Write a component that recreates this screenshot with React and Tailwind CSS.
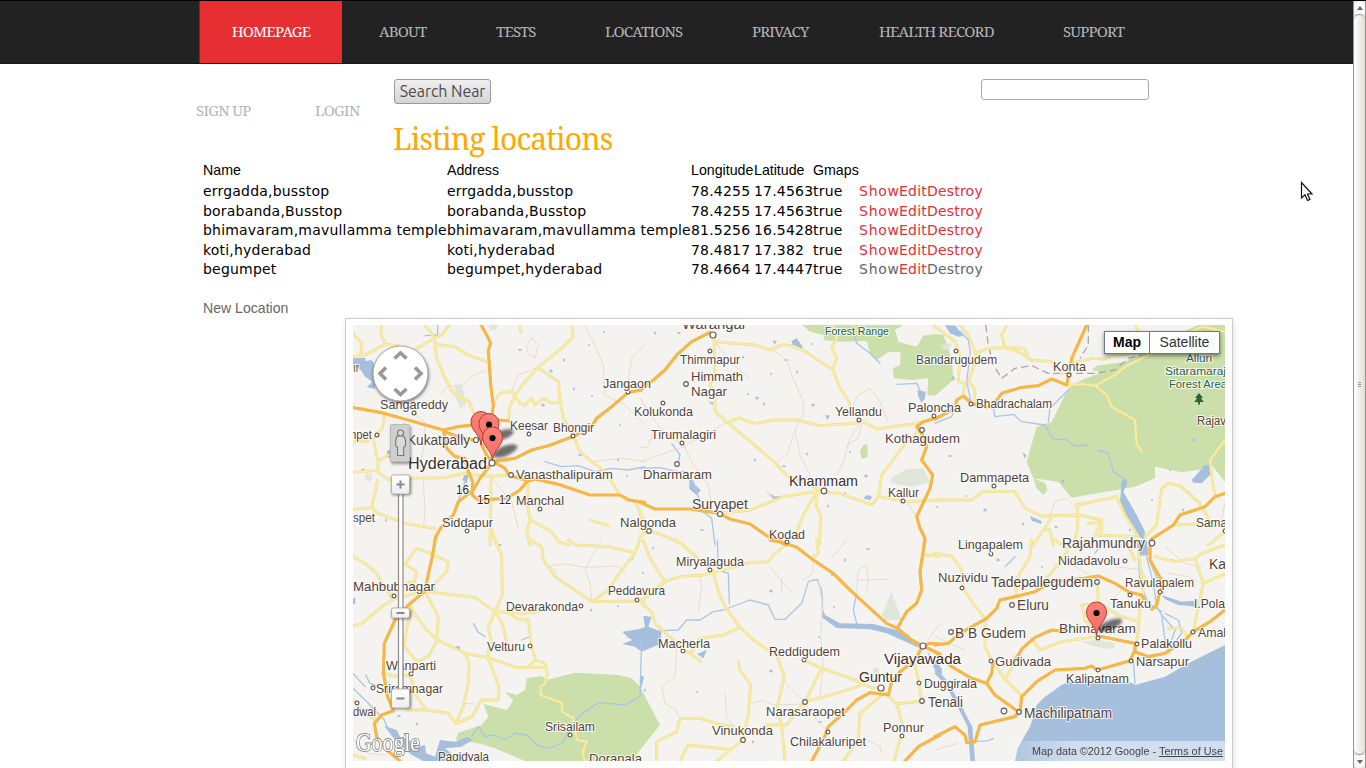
import React from "react";

/* Each tile is traced on a grid three times finer than the page. */
const TILES = [
  {
    x: 345, y: 315,
    green: [],
    pale: ["M330 215 L352 208 L362 270 L345 280 L332 250Z", "M60 475 L82 480 L78 498 L60 495Z", "M430 30 L460 30 L455 44 L435 46Z"],
    water: ["M24 130 L60 128 L62 138 L80 135 L95 160 L90 222 L65 216 L82 200 L60 185 L48 165 L24 150Z", "M360 475 L372 480 L365 505 L352 495Z", "M125 408 L140 402 L138 432 L128 425Z"],
    river: ["M600 440 L650 455 L700 452 L750 470 L800 460 L850 465 L900 455", "M278 30 L278 60 L240 62", "M360 500 L345 540 L340 560"],
    minor: ["M425 165 L380 185 L350 210 L310 215 L285 235", "M545 95 L560 68 L580 90 L570 130 L550 115Z", "M720 30 L745 80 L775 150 L778 240 L840 270 L900 330", "M900 90 L860 130 L845 225", "M575 158 L520 180 L500 230", "M235 500 L240 590 L235 640", "M440 490 L500 560 L520 640", "M740 440 L830 430 L900 440", "M205 250 L215 300 L240 320 L235 400 L225 470"],
    yellow: ["M24 125 L65 118 L120 88 L160 92", "M110 30 L108 60 L122 88", "M24 55 L50 85 L48 120", "M315 30 L290 60 L268 68 L220 98 L195 110", "M240 30 L255 50 L268 68 L275 130 L300 190 L325 235 L372 260 L385 290 L395 310", "M270 88 L330 95 L370 120 L430 142", "M680 30 L685 65 L655 95 L625 120 L578 158 L540 200 L510 240 L495 275 L490 315", "M578 158 L640 200 L645 255 L655 310 L685 360 L705 410 L740 440 L775 465 L800 500 L825 540 L870 560 L900 620 L895 650", "M447 262 L465 235 L500 228 L525 265 L540 270 L560 250 L570 270 L595 250 L620 265 L645 260", "M120 295 L112 340 L85 370 L90 400 L100 440 L98 470 L130 495 L190 490 L300 488 L360 475 L430 485 L490 480", "M24 472 L98 466", "M24 583 L80 578 L100 595 L180 625 L270 640", "M24 380 L70 378", "M98 495 L80 578", "M98 440 L130 420", "M438 480 L435 690", "M548 505 L550 590 L556 615 L620 650 L640 680 L670 690", "M556 615 L545 650 L555 690", "M735 615 L790 632", "M525 30 L528 52", "M437 640 L455 690"],
    orange: ["M24 278 L110 293 L200 318 L295 345 L340 335 L400 328 L440 312 L490 318", "M408 30 L425 60 L437 85 L430 105 L437 210 L445 270 L440 312", "M295 345 L305 400 L330 425 L360 430 L368 465 L383 500 L382 540 L400 555 L485 550 L525 525 L545 500 L570 492 L640 508 L735 540 L825 540 L850 555 L900 562", "M300 350 L355 372 L390 375", "M410 390 L425 420 L440 440 L510 430 L560 405 L610 392 L690 362 L740 335 L755 310 L800 275 L850 232 L890 225", "M445 440 L480 460 L492 480 L520 490 L548 495", "M440 445 L405 490 L385 525 L340 560 L325 600 L290 635 L272 665 L268 690"],
  },
  {
    x: 345, y: 540,
    green: ["M332 600 L340 578 L410 555 L430 530 L415 492 L485 510 L505 482 L480 456 L515 465 L540 450 L545 415 L590 408 L605 420 L690 398 L820 405 L860 415 L885 440 L945 555 L885 630 L860 663 H540 L450 625 L400 610Z"],
    pale: ["M130 160 L150 158 L150 178 L132 176Z"],
    water: ["M900 262 L880 268 L832 275 L850 293 L862 300 L832 312 L870 320 L890 335 L945 312 L950 275 L910 260 L920 230 L895 228Z", "M118 558 L155 570 L165 590 L190 598 L215 622 L240 615 L243 640 L270 650 L285 600 L330 605 L370 590 L382 600 L350 620 L300 625 L325 645 L300 663 H235 L200 645 L150 600Z", "M24 175 L32 175 L30 192 L24 192Z", "M328 320 L345 318 L345 328 L332 330Z"],
    river: ["M380 590 L400 560 L420 590 L450 585 L480 600 L510 580 L545 585 L575 615 L610 625 L650 610 L680 560 L700 530 L760 488 L840 495 L885 470 L890 300", "M24 445 L70 490 L118 540 L130 570", "M62 405 L75 430 L100 440", "M385 250 L398 275 L420 290", "M530 300 L555 290", "M24 400 L60 440"],
    minor: ["M615 78 L660 72 L720 82 L820 78 L840 100", "M615 78 L640 100", "M770 0 L740 50 L720 90 L735 130 L740 180", "M360 490 L390 492", "M24 600 L70 640 L120 645"],
    yellow: ["M24 50 L60 70 L95 100 L120 150 L150 170", "M24 258 L50 250 L75 230 L110 200 L150 175 L235 155", "M262 42 L215 25 L180 72 L215 95 L208 125 L185 130", "M262 42 L310 65 L305 95 L270 130 L265 155", "M245 155 L390 172 L450 215 L540 220 L580 215", "M450 0 L470 45 L472 165 L450 215 L430 260 L438 300 L428 352", "M190 195 L245 270 L277 300 L360 340 L428 352 L515 383 L600 383", "M243 160 L280 230 L275 305 L250 350 L235 355", "M200 200 L185 265 L178 320 L215 365 L240 355", "M115 400 L155 410 L195 405 L215 470 L245 510", "M185 510 L245 510 L310 520 L333 550 L355 500 L370 430 L372 370 L360 340", "M333 550 L382 530 L408 480 L460 480 L462 440 L428 352", "M450 215 L470 245 L485 305", "M490 220 L520 238 L550 240 L560 320 L572 360 L600 370 L607 400 L600 432 L587 440 L587 465 L650 488 L652 515 L685 535 L695 600 L725 605 L712 640 L720 663", "M545 383 L572 360", "M555 0 L590 20 L595 60 L630 110 L740 185 L880 183 L900 187", "M740 185 L790 150 L830 90 L870 40 L885 0", "M670 0 L690 15 L790 20 L870 38", "M24 645 L60 655", "M24 480 L60 520 L90 540"],
    orange: ["M270 0 L262 50 L245 125 L238 155 L190 195 L150 240 L118 310 L115 400 L128 470 L145 512 L110 525 L88 550 L95 590 L125 630 L165 663"],
  },
  {
    x: 640, y: 315,
    green: ["M487 30 L510 50 L550 60 L552 75 L610 80 L680 78 L690 115 L710 135 L745 112 L782 110 L780 150 L758 160 L762 190 L820 195 L865 190 L862 240 L885 242 L940 195 L935 130 L910 60 L885 57 L850 62 L830 95 L775 80 L765 45 L790 30Z", "M670 390 L682 388 L683 425 L665 432 L660 410Z"],
    pale: ["M752 490 L800 463 L850 460 L870 500 L820 515 L755 505Z", "M235 30 L290 30 L270 42Z"],
    water: ["M455 78 L470 70 L490 98 L460 100Z", "M832 225 L857 230 L855 250 L845 264 L835 245Z", "M388 535 L405 545 L420 542 L405 558Z", "M670 550 L680 540 L697 545 L690 556Z", "M148 488 L160 505 L182 525 L170 540 L148 522Z", "M555 300 L570 302 L562 315Z", "M398 75 L410 78 L404 90Z", "M205 260 L220 262 L218 270Z"],
    river: ["M95 385 L120 420 L115 440", "M0 460 L60 458 L110 470 L140 470 L160 500 L190 590 L215 610 L225 690", "M640 50 L650 85 L690 115 L720 145", "M770 208 L830 205 L840 225"],
    minor: ["M400 105 L440 135 L455 180 L490 260 L490 300 L465 345 L440 420 L410 440", "M465 345 L480 420 L515 490", "M640 270 L655 240 L690 220 L720 260 L745 325", "M660 320 L630 370 L610 440 L590 480", "M665 325 L655 370 L620 390", "M225 80 L280 150 L330 190", "M0 440 L120 400 L260 322", "M130 390 L160 450 L205 510 L215 570", "M0 250 L60 340 L140 400", "M378 525 L395 550", "M800 560 L830 605", "M0 398 L20 398 L40 355"],
    yellow: ["M222 65 L225 80 L345 90 L390 105 L430 88 L465 95 L500 112 L540 140 L578 163 L598 215 L628 262 L632 280", "M578 163 L590 130 L575 95 L590 70 L580 30", "M222 70 L225 180 L210 210 L225 240 L225 290 L262 322 L320 370 L400 438 L445 485", "M262 322 L300 308 L318 318 L350 325 L400 315 L470 315 L540 332 L640 325 L665 318 L710 342 L830 325 L850 320", "M240 595 L330 585 L380 565 L430 545 L530 530 L600 535 L695 570 L715 545 L800 560 L900 555", "M715 545 L725 480 L770 420 L800 380 L840 345", "M530 530 L490 600 L470 650", "M530 530 L528 570 L543 605 L538 690", "M440 480 L490 500 L540 525", "M0 640 L30 648 L80 665 L130 690", "M0 600 L25 648 L0 665", "M880 30 L900 45"],
    orange: ["M0 225 L40 195 L75 165 L110 120 L155 80 L210 52", "M0 562 L45 582 L150 582 L238 595 L270 612 L330 627 L380 662 L440 690", "M900 305 L850 320 L830 335 L848 360 L860 395 L845 435 L878 480 L870 520 L830 605 L840 640 L855 670 L852 690"],
  },
  {
    x: 640, y: 540,
    green: [],
    pale: ["M755 155 L785 240 L735 240 L725 225Z", "M700 385 L715 382 L718 405 L700 402Z"],
    water: ["M545 195 L555 225 L600 250 L700 252 L770 270 L830 310 L840 325 L790 302 L740 280 L690 268 L590 264 L545 232Z", "M862 335 L905 385 L905 425 L872 365Z", "M170 342 L200 330 L190 355Z", "M0 405 L12 410 L5 440 L0 450Z"],
    river: ["M60 272 L115 270 L140 240 L180 240 L220 215 L250 210 L330 180 L385 195 L405 238 L435 238 L485 190 L505 125 L530 118 L545 150 L548 200", "M650 250 L640 210 L650 160", "M232 0 L235 90 L265 100 L268 190"],
    minor: ["M390 80 L430 130 L452 153", "M425 115 L425 150", "M535 118 L548 200 L542 290 L550 380 L540 470", "M650 150 L655 90 L678 75 L685 110 L680 150", "M655 120 L740 118", "M110 330 L105 410 L65 440 L75 490 L110 510 L115 530", "M433 425 L495 487", "M332 490 L370 482 L400 495 L495 492", "M495 490 L530 540 L565 575", "M180 110 L185 140 L175 215", "M900 250 L865 300", "M520 40 L518 100 L490 120", "M680 600 L720 620 L725 640", "M620 0 L575 55", "M255 460 L260 530 L300 590"],
    yellow: ["M0 185 L38 220 L45 250 L100 300 L130 330 L150 340 L183 365", "M75 125 L120 110 L190 105 L230 95 L330 68 L385 65 L400 45 L440 12", "M220 95 L235 155 L255 200 L300 262 L340 300 L412 350 L433 410 L412 500 L425 560 L435 663", "M155 335 L180 295 L250 285 L300 262", "M10 0 L30 55 L75 125 L0 185", "M110 0 L150 35 L210 85", "M490 360 L545 385 L625 412 L700 445 L720 443 L770 492 L790 560 L762 663", "M545 385 L495 485 L440 555 L380 555", "M495 485 L590 460 L665 435", "M720 470 L660 520 L655 600 L610 663", "M770 492 L845 483", "M825 375 L838 430 L845 483", "M295 365 L300 390 L332 435 L325 520 L308 600 L230 663", "M50 663 L50 605 L110 575 L120 535 L180 535 L220 548 L280 560", "M120 663 L145 615 L270 628", "M530 0 L535 40 L520 55", "M855 45 L900 48"],
    orange: ["M390 0 L430 8 L470 22 L520 60 L580 100 L625 145 L690 205 L740 250 L772 265 L815 300 L848 318 L900 342", "M855 0 L840 95 L845 150 L830 190 L800 215 L772 265", "M848 318 L870 310 L900 312", "M848 318 L825 360 L780 395 L755 425 L745 465 L690 458 L650 480 L610 520 L565 560 L550 600 L515 663", "M900 585 L835 620 L795 663"],
  },
  {
    x: 935, y: 315,
    green: ["M790 30 L700 70 L640 110 L570 140 L485 152 L470 165 L500 172 L440 195 L400 220 L350 320 L305 335 L275 440 L295 490 L370 500 L410 548 L600 515 L660 490 L660 455 L740 472 L820 460 L830 450 L870 500 V30Z", "M295 490 L330 505 L337 525 L325 540 L305 520Z"],
    pale: ["M20 90 L50 85 L45 105 L20 100Z"],
    water: ["M570 490 L578 500 L565 530 L605 600 L630 650 L628 672 L605 665 L575 610 L555 560 L560 500Z", "M770 495 L810 450 L828 450 L825 480 L800 505 L775 503Z", "M30 30 L62 32 L75 50 L85 62 L70 65 L45 55Z", "M285 603 L320 618 L318 627 L290 617Z", "M262 412 L274 420 L270 432Z", "M50 180 L60 188 L55 198Z", "M378 498 L388 492 L385 508Z"],
    river: ["M75 48 L100 75 L106 110 L95 200 L110 270 L175 280 L180 305 L235 298 L260 320 L330 330 L355 375 L390 372 L420 393 L460 390", "M490 405 L520 415 L535 470 L570 495", "M340 320 L345 280 L400 225", "M0 325 L50 305 L60 280"],
    minor: ["M345 600 L360 560 L395 550 L425 580", "M870 560 L860 620"],
    yellow: ["M75 30 L100 60 L122 115 L118 150 L100 200 L120 225 L118 260", "M122 115 L160 100 L205 97 L250 110 L290 135 L350 140 L380 175", "M215 30 L200 60 L210 97 L270 100 L280 130", "M0 35 L60 80 L75 120 L70 200 L90 205 L85 240", "M410 145 L470 130 L510 132 L540 120 L600 115", "M395 212 L440 207 L480 212 L540 180 L570 155 L640 120 L700 85 L800 35 L870 50", "M600 30 L608 45", "M480 212 L515 240 L530 275 L600 315 L605 390 L620 408", "M870 375 L825 435 L832 500 L840 540", "M0 555 L110 555 L145 530 L240 530 L270 580 L320 603 L430 600 L500 615 L500 650", "M425 570 L545 545 L570 600 L610 665", "M428 570 L428 640 L415 690", "M355 600 L325 645 L295 690", "M325 645 L345 645 L355 690", "M630 665 L665 630 L680 520 L700 505 L735 512 L790 560 L830 625", "M720 630 L830 625", "M870 650 L820 690", "M460 625 L500 622 L480 660 L600 665"],
    orange: ["M455 30 L435 75 L410 130 L395 210 L350 192 L310 212 L255 218 L200 235 L180 262 L155 278 L110 265 L85 243 L65 255 L60 280 L0 312", "M870 535 L840 545 L810 575 L735 600 L715 630 L650 672"],
    border: ["M152 30 L160 90 L175 150 L200 190 L240 160 L290 152 L340 175 L480 175 L540 165 L580 130 L620 120", "M460 30 L460 90 L435 130"],
  },
  {
    x: 935, y: 540,
    green: [],
    pale: ["M440 305 L490 300 L540 310 L535 328 L480 320Z"],
    water: ["M870 315 L820 340 L760 370 L690 410 L600 435 L590 428 L530 422 L460 428 L400 425 L380 435 L330 470 L305 495 L295 530 L285 560 L265 595 L248 625 L240 663 H870Z", "M680 165 L740 185 L775 182 L785 200 L730 195 L690 178Z", "M605 0 L635 0 L640 45 L610 48Z", "M0 385 L35 420 L75 490 L112 560 L120 663 H106 L98 560 L65 495 L28 430 L0 402Z"],
    river: ["M632 40 L650 110 L660 160 L665 200 L680 225 L690 300 L702 335", "M610 50 L615 130 L640 190 L680 215", "M595 360 L600 430", "M690 220 L730 240 L740 280 L725 300", "M680 225 L720 270 L710 300", "M120 605 L160 602 L175 595", "M645 65 L685 160", "M210 80 L240 50", "M480 40 L500 10"],
    minor: ["M90 330 L0 290", "M540 80 L620 90 L640 130", "M385 60 L440 90 L480 115", "M690 20 L750 70 L800 80", "M0 630 L70 610", "M560 150 L520 190", "M190 400 L240 350", "M700 100 L760 110 L800 130"],
    yellow: ["M0 40 L50 48 L80 90 L85 145 L120 200 L150 235 L150 320 L170 360 L210 418 L258 465", "M290 0 L285 50 L240 125 L245 170", "M360 0 L400 30 L380 60 L310 145", "M210 418 L235 375 L240 350", "M290 295 L315 330 L380 305 L485 290", "M487 125 L490 190 L440 195 L450 240 L490 290", "M490 190 L560 230 L612 245 L615 165", "M612 245 L605 310", "M660 50 L720 65 L780 55 L800 40 L870 15", "M780 55 L805 130 L790 200 L775 275", "M805 130 L870 100", "M700 265 L740 265 L760 295", "M610 30 L625 160", "M570 0 L600 60"],
    orange: ["M0 315 L40 310 L75 280 L155 235 L185 205 L195 180 L240 170 L300 155 L350 125 L450 115 L490 108 L540 130 L580 155 L620 165 L628 178", "M645 20 L645 60 L685 130 L672 165 L665 195 L650 208", "M238 365 L262 325 L300 292 L350 270 L390 275", "M490 288 L600 310 L600 335 L640 350 L690 340 L750 300 L775 275 L825 245 L870 210", "M600 330 L585 362 L487 390 L470 378 L450 385 L360 390 L305 425 L260 470 L255 515", "M0 335 L50 380 L110 415 L155 430 L180 465 L250 515 L240 530 L135 555 L120 605 L95 608 L90 585 L60 560 L0 590", "M175 365 L170 400 L155 430"],
  },
];

/* name, x, baseline, width, size, tone */
const LABELS = [
  ["ır", 353, 372, 6, 13], ["Sangareddy", 380, 409, 68, 13], ["Keesar", 510, 430, 38, 13], ["Bhongir", 553, 432, 41, 13],
  ["Kukatpally", 407, 445, 63, 14], ["Hyderabad", 408, 469, 79, 16, 1], ["Vanasthalipuram", 516, 479, 97, 13], ["Manchal", 516, 505, 48, 13],
  ["Siddapur", 442, 527, 51, 13], ["16", 456, 494, 13, 12, 2], ["15", 477, 504, 13, 12, 2], ["12", 499, 504, 12, 12, 2], ["npet", 350, 439, 22, 12.5],
  ["spet", 353, 522, 22, 12.5], ["Jangaon", 603, 388, 48, 13], ["Warangal", 682, 329, 63, 14], ["Thimmapur", 680, 364, 60, 13],
  ["Himmath", 691, 381, 52, 13], ["Nagar", 691, 396, 36, 13], ["Kolukonda", 634, 416, 59, 13], ["Tirumalagiri", 651, 439, 65, 13],
  ["Dharmaram", 643, 479, 69, 13], ["Suryapet", 692, 509, 56, 14], ["Nalgonda", 620, 527, 56, 13], ["Khammam", 789, 486, 69, 15, 1],
  ["Yellandu", 835, 416, 47, 13], ["Paloncha", 908, 412, 53, 13], ["Kothagudem", 885, 443, 75, 13], ["Kallur", 888, 497, 31, 13],
  ["Kodad", 769, 539, 36, 13], ["Bandarugudem", 916, 364, 81, 13], ["Konta", 1053, 371, 33, 13], ["Bhadrachalam", 976, 408, 76, 12.5],
  ["Rajav", 1197, 425, 29, 12.5], ["Dammapeta", 960, 482, 69, 13], ["Lingapalem", 958, 549, 65, 13], ["Rajahmundry", 1062, 548, 83, 14.5],
  ["Sama", 1196, 527, 31, 13], ["Mahbubnagar", 353, 591, 82, 13.5], ["Devarakonda", 506, 611, 72, 13], ["Velturu", 487, 651, 38, 13],
  ["Wanparti", 386, 670, 50, 13], ["Sriramnagar", 376, 693, 67, 13], ["dwal", 353, 716, 23, 13], ["Srisailam", 545, 731, 50, 13],
  ["Pagidyala", 438, 761, 51, 13], ["Doranala", 589, 763, 53, 13], ["Miryalaguda", 676, 566, 68, 13], ["Peddavura", 608, 595, 57, 13],
  ["Macherla", 658, 648, 52, 13], ["Reddigudem", 769, 656, 71, 13], ["Narasaraopet", 766, 716, 79, 13], ["Vinukonda", 712, 735, 61, 13],
  ["Chilakaluripet", 790, 746, 76, 13], ["Ponnur", 883, 732, 41, 13], ["Guntur", 859, 682, 43, 15, 1], ["Vijayawada", 884, 664, 77, 15.5, 1],
  ["Duggirala", 924, 688, 53, 13], ["Tenali", 928, 707, 35, 14], ["Nuzividu", 938, 582, 50, 13], ["Tadepallegudem", 991, 587, 102, 14],
  ["Nidadavolu", 1058, 565, 62, 13], ["Eluru", 1017, 610, 32, 14], ["B B Gudem", 955, 638, 71, 14], ["Gudivada", 995, 666, 56, 13],
  ["Machilipatnam", 1024, 718, 88, 14], ["Kalipatnam", 1066, 683, 63, 13], ["Bhimavaram", 1059, 633, 77, 13.5], ["Tanuku", 1110, 608, 41, 13],
  ["Ravulapalem", 1125, 587, 69, 12.5], ["I.Pola", 1194, 608, 31, 13], ["Palakollu", 1141, 648, 51, 13], ["Narsapur", 1136, 666, 53, 13],
  ["Amal", 1198, 637, 28, 13], ["Ka", 1209, 569, 17, 14],
  ["Forest Range", 825, 335, 64, 11, 3], ["Alluri", 1186, 362, 26, 11.5, 3], ["Sitaramaraj", 1165, 375, 61, 11.5, 3], ["Forest Area", 1169, 388, 58, 11.5, 3],
];

const LABEL_COLOR = ["#52443b", "#382f2a", "#2b2622", "#28603f"];

/* x, y, radius */
const TOWNS = [
  [414, 413], [529, 434], [573, 436], [476, 440, 2.5], [492, 463, 3], [511, 475, 2.3], [540, 509], [467, 531], [628, 392], [713, 335, 3],
  [710, 351], [686, 384, 2.3], [663, 403], [682, 443], [677, 464, 2.3], [720, 514, 2.5], [649, 531, 2.3], [824, 491, 2.8], [859, 420], [934, 416],
  [922, 430, 2.3], [903, 501], [787, 542], [956, 351], [1069, 375], [971, 404], [994, 486], [991, 554], [1152, 543, 2.8], [377, 435],
  [394, 596], [581, 606], [530, 646], [411, 674], [373, 688], [357, 703], [570, 735], [710, 570], [637, 600], [683, 651], [804, 660], [805, 702, 2.3],
  [743, 740, 2.3], [828, 732], [902, 736], [881, 688, 3], [923, 646, 3], [919, 683], [922, 701, 2.3], [962, 588], [1097, 582, 2.3], [1125, 561],
  [1012, 605, 2.3], [951, 632, 2.3], [991, 661], [1004, 711, 2.8], [1019, 712, 2.3], [1098, 670], [1098, 638], [1130, 595], [1160, 592],
  [1137, 644], [1131, 661], [1193, 632], [1225, 531],
];

const PONDS = [
  [520, 350], [574, 389], [592, 396], [551, 371], [604, 332], [417, 724], [399, 716], [591, 610], [618, 606], [632, 558], [643, 573], [655, 333], [679, 333],
  [743, 357], [748, 394], [757, 398], [771, 374], [764, 404], [786, 360], [797, 372], [812, 344], [813, 405], [697, 478], [755, 460], [784, 466],
  [807, 454], [850, 452], [866, 476], [845, 493], [828, 506], [702, 530], [653, 548], [720, 560], [771, 591], [834, 607], [845, 560], [868, 549],
  [832, 575], [819, 637], [771, 671], [697, 692], [753, 742], [820, 722], [645, 690], [966, 496], [985, 510], [937, 507], [1023, 524], [1056, 527],
  [1041, 534], [1170, 470], [1193, 440], [1152, 500], [1131, 360], [950, 456], [1130, 530], [1172, 560], [998, 560], [1042, 567], [1183, 510],
  [580, 455], [618, 460], [627, 476], [363, 470], [404, 424], [386, 520], [500, 545], [564, 360], [589, 345], [543, 405], [620, 425],
];

const layer = (key, props) => (
  <g {...props}>
    {TILES.map((t, i) => (
      <g key={i} transform={`translate(${t.x} ${t.y}) scale(0.33333)`}>
        {(t[key] || []).map((d, j) => <path key={j} d={d} />)}
      </g>
    ))}
  </g>
);

const line = (stroke, strokeWidth, extra) => ({ fill: "none", stroke, strokeWidth, strokeLinecap: "round", strokeLinejoin: "round", ...extra });

function Pin({ x, y, dot = true }) {
  return (
    <g transform={`translate(${x} ${y})`}>
      <path d="M0 0 C-1 -11 -10 -14 -10 -23.5 A10 10 0 0 1 10 -23.5 C10 -14 1 -11 0 0Z" fill="url(#pin)" stroke="#b33a35" strokeWidth="1" />
      {dot && <circle cx="0" cy="-22.5" r="3.1" fill="#000" />}
    </g>
  );
}

function MapCanvas() {
  return (
    <svg className="block h-[436px] w-[872px]" viewBox="353 325 872 436" fontFamily="'Liberation Sans', Arial, sans-serif">
      <defs>
        <linearGradient id="pin" x1="0" y1="0" x2="0" y2="1"><stop offset="0" stopColor="#fc8177" /><stop offset="1" stopColor="#f86e65" /></linearGradient>
        <linearGradient id="fade" x1="0" x2="1"><stop offset="0" stopColor="#fff" stopOpacity="0" /><stop offset="0.35" stopColor="#fff" stopOpacity="0.5" /><stop offset="1" stopColor="#fff" stopOpacity="0.5" /></linearGradient>
        <linearGradient id="knob" x1="0" y1="0" x2="0" y2="1"><stop offset="0" stopColor="#fff" /><stop offset="1" stopColor="#ededed" /></linearGradient>
        <filter id="soft" x="-50%" y="-50%" width="200%" height="200%"><feGaussianBlur stdDeviation="1.5" /></filter>
      </defs>
      <rect x="353" y="325" width="872" height="436" fill="#f4f3f0" />
      {layer("green", { fill: "#cbdfab" })}
      {layer("pale", { fill: "#dfe6da" })}
      <g fill="#a9c3e6">{PONDS.map(([x, y], i) => <ellipse key={i} cx={x} cy={y} rx={i % 3 ? 1 : 1.8} ry={i % 2 ? 1.5 : 1} />)}</g>
      {layer("water", { fill: "#a5bfdd" })}
      {layer("river", line("#a9c6ea", 4))}
      {layer("minor", line("#e8dbce", 3))}
      {layer("border", line("#aaa8a4", 4, { strokeDasharray: "22 12", strokeLinecap: "butt" }))}
      {layer("yellow", line("#ebdc9c", 8.5))}
      {layer("yellow", line("#f9ee9c", 5))}
      {layer("orange", line("#ecb75c", 9.5))}
      {layer("orange", line("#fab740", 6.5))}
      <g fill="#fff" stroke="#665f58" strokeWidth="1.2">
        {TOWNS.map(([x, y, r = 1.9], i) => <circle key={i} cx={x} cy={y} r={r} />)}
      </g>
      <g stroke="#fff" strokeOpacity="0.8" strokeWidth="2.2" strokeLinejoin="round" paintOrder="stroke">
        {LABELS.map(([name, x, y, w, size, tone = 0], i) => (
          <text key={i} x={x} y={y} textLength={w} lengthAdjust="spacingAndGlyphs" fontSize={size} fill={LABEL_COLOR[tone]}>{name}</text>
        ))}
      </g>
      <path d="M1199 393 l4 5 h-2.2 l3 4 h-3.8 v2.5 h-2 v-2.5 h-3.8 l3 -4 h-2.2Z" fill="#2c6141" />

      <g fill="#000" opacity="0.55" filter="url(#soft)">
        <ellipse cx="502" cy="435" rx="12" ry="4.5" transform="rotate(-18 502 435)" />
        <ellipse cx="505" cy="451" rx="13" ry="5" transform="rotate(-22 505 451)" />
        <ellipse cx="1110" cy="625" rx="13" ry="4.5" transform="rotate(-22 1110 625)" />
      </g>
      <Pin x={481} y={445} dot={false} /><Pin x={489} y={447} /><Pin x={492.5} y={460.5} /><Pin x={1096.5} y={635.5} />

      <circle cx="401" cy="375" r="28" fill="#000" opacity="0.5" filter="url(#soft)" />
      <circle cx="400.5" cy="373.5" r="27.5" fill="#fff" stroke="#aaa" strokeWidth="1" />
      <g fill="none" stroke="#999" strokeWidth="3.6">
        <path d="M394.5 358.500l6 -5.500l6 5.500" /><path d="M394.500 389l6 5.500l6 -5.500" />
        <path d="M386 367.500l-6 6l6 6" /><path d="M415 367.500l6 6l-6 6" />
      </g>
      <rect x="391" y="426" width="20" height="38" rx="2" fill="#000" opacity="0.4" filter="url(#soft)" />
      <rect x="390.500" y="424.500" width="19" height="37" rx="1.500" fill="#cfcfcf" stroke="#bbb" />
      <g fill="#dadada" stroke="#777" strokeWidth="1.1">
        <path d="M397 436.500 q3.500 -2 7 0 l1.500 3.500 v6 l-1.800 1 v8.500 h-6.200 v-8.500 l-1.800 -1 v-6Z" />
        <circle cx="400.500" cy="433" r="3" />
      </g>
      <rect x="398.500" y="492" width="4.500" height="200" fill="#fff" stroke="#8a8a8a" strokeWidth="1.2" />
      {[[475, 19], [608, 10], [689, 19]].map(([y, h]) => (
        <g key={y}>
          <rect x="392" y={y + 1} width="19" height={h} rx="2" fill="#000" opacity="0.5" filter="url(#soft)" />
          <rect x="391.500" y={y} width="18" height={h} rx="2" fill="url(#knob)" stroke="#aaa" strokeWidth="0.8" />
          <path d={`M396.500 ${y + h / 2}h8`} stroke="#888" strokeWidth="2" />
        </g>
      ))}
      <path d="M400.500 480.500v8" stroke="#888" strokeWidth="2" />

      <text x="356" y="751" fontFamily="'Liberation Serif', serif" fontSize="25" textLength="64" lengthAdjust="spacingAndGlyphs" fill="#fff" stroke="#8b8b8b" strokeWidth="1.8" paintOrder="stroke">Google</text>
      <rect x="995" y="741" width="230" height="20" fill="url(#fade)" />
      <g fontSize="11" fill="#444">
        <text x="1032" y="755" textLength="124" lengthAdjust="spacingAndGlyphs">Map data ©2012 Google -</text>
        <text x="1159" y="755" textLength="64" lengthAdjust="spacingAndGlyphs">Terms of Use</text>
        <path d="M1159 756.500h64" stroke="#444" />
      </g>
    </svg>
  );
}

const NAV = [
  ["ABOUT", "w-[117px]"], ["TESTS", "w-[109px]"], ["LOCATIONS", "w-[147px]"], ["PRIVACY", "w-[127px]"], ["HEALTH RECORD", "w-[184px]"], ["SUPPORT", "w-[100px]"],
];

const ROWS = [
  ["errgadda,busstop", "errgadda,busstop", "78.4255", "17.4563"],
  ["borabanda,Busstop", "borabanda,Busstop", "78.4255", "17.4563"],
  ["bhimavaram,mavullamma temple", "bhimavaram,mavullamma temple", "81.5256", "16.5428"],
  ["koti,hyderabad", "koti,hyderabad", "78.4817", "17.382"],
  ["begumpet", "begumpet,hyderabad", "78.4664", "17.4447"],
];

const GRID = "grid grid-cols-[244px_244px_63px_59px_46px_40px_28px_56px] whitespace-nowrap";

function Scrollbar() {
  return (
    <div className="flex h-[767px] w-[13px] shrink-0 flex-col border-x border-[#989490] bg-[#e8e6e3]">
      <div className="flex h-[13px] items-center justify-center rounded-t-full bg-[#f8f8f7]">
        <svg width="6" height="4"><path d="M0 4 L3 0 L6 4Z" fill="#666" /></svg>
      </div>
      <div className="flex flex-1 flex-col items-center justify-center gap-px rounded-full border-y border-[#989490] bg-linear-to-r from-white to-[#dfded9]">
        <i className="h-px w-[3px] bg-[#999]" /><i className="h-px w-[3px] bg-[#999]" /><i className="h-px w-[3px] bg-[#999]" />
      </div>
      <div className="flex h-[13px] items-center justify-center rounded-b-full bg-[#f8f8f7]">
        <svg width="6" height="4"><path d="M0 0 L3 4 L6 0Z" fill="#666" /></svg>
      </div>
    </div>
  );
}

export default function App() {
  return (
    <div className="relative flex h-[768px] w-[1366px] overflow-hidden border-t border-black bg-white font-['Liberation_Sans',Arial,sans-serif]">
      <div className="flex min-w-0 flex-1 flex-col">
        <nav className="flex h-[63px] shrink-0 items-center border-b border-[#181818] bg-[#222] pl-[199px] font-['Noto_Serif','Liberation_Serif',serif] text-[15px] leading-[20px] tracking-[-0.82px] whitespace-nowrap text-[#b5b5b5]">
          <a className="mr-[37px] flex h-full w-[143px] items-center justify-center border-l border-[#8e2226] bg-[#e62e33] pb-[2px] text-white">HOMEPAGE</a>
          {NAV.map(([label, width]) => <a key={label} className={`${width} pb-[2px]`}>{label}</a>)}
        </nav>

        <div className="flex h-[57px] shrink-0 pl-[196px]">
          <div className="flex w-[198px] pt-[35px] font-['Noto_Serif','Liberation_Serif',serif] text-[15px] leading-[22px] tracking-[-0.7px] whitespace-nowrap text-[#b5b5b5]">
            <a className="w-[119px]">SIGN UP</a>
            <a>LOGIN</a>
          </div>
          <button className="mt-[15px] h-[25px] w-[97px] rounded-[3px] border border-[#999] bg-linear-to-b from-[#f0f0f0] to-[#d4d4d4] text-center font-['Ubuntu','Open_Sans',sans-serif] text-[16px] leading-[21px] tracking-[-0.05px] whitespace-nowrap text-[#4c4c4c]">Search Near</button>
          <input className="mt-[15px] ml-[490px] h-[21px] w-[168px] rounded-[3px] border border-[#aaa] bg-white outline-none" />
        </div>

        <h1 className="h-[38px] shrink-0 pl-[393px] font-['Noto_Serif','Liberation_Serif',serif] text-[30px] leading-[36px] tracking-[-0.85px] whitespace-nowrap text-[#ffa800]">Listing locations</h1>

        <section className="h-[159px] shrink-0 pl-[203px] text-black">
          <div className={`${GRID} h-[23px] text-[14.2px] leading-[22px]`}>
            <span>Name</span><span>Address</span><span>Longitude</span><span>Latitude</span><span>Gmaps</span>
          </div>
          {ROWS.map((row, i) => (
            <div key={i} className={`${GRID} h-[19.5px] font-['Verdana','DejaVu_Sans',sans-serif] text-[14px] leading-[19.5px] tracking-[0.2px]`}>
              {row.map((cell, j) => <span key={j}>{cell}</span>)}
              <span>true</span>
              <a className={i === 4 ? "tracking-[0.75px] text-[#666]" : "tracking-[0.75px] text-[#e62e33]"}>Show</a>
              <a className="text-[#e62e33]">Edit</a>
              <a className={i === 4 ? "text-[#666]" : "text-[#e62e33]"}>Destroy</a>
            </div>
          ))}
          <a className="mt-[19px] block text-[14.1px] leading-[19px] text-[#666]">New Location</a>
        </section>

        <section className="ml-[345px] h-[460px] w-[888px] shrink-0 border border-[#ccc] bg-white px-[7px] pt-[6px] shadow-[1px_2px_6px_rgba(0,0,0,0.12)]">
          <div className="relative h-[436px] w-[872px]">
            <MapCanvas />
            <div className="absolute top-[6px] right-[5px] flex h-[23px] w-[116px] border border-[#6b7a90] bg-white text-[14px] leading-[21px] text-[#333] shadow-[0_2px_4px_rgba(0,0,0,0.45)]">
              <b className="w-[45px] border-r border-[#6b7a90] text-center text-black">Map</b>
              <span className="flex-1 text-center">Satellite</span>
            </div>
          </div>
        </section>
      </div>
      <Scrollbar />
      <svg className="absolute top-[180px] left-[1300px] h-[22px] w-[15px]" viewBox="0 0 15 22">
        <path d="M1.500 1.500 V17 L5 13.800 L7.500 19.500 L10 18.400 L7.500 13 H12Z" fill="#fff" stroke="#111" strokeWidth="1.200" />
      </svg>
    </div>
  );
}
